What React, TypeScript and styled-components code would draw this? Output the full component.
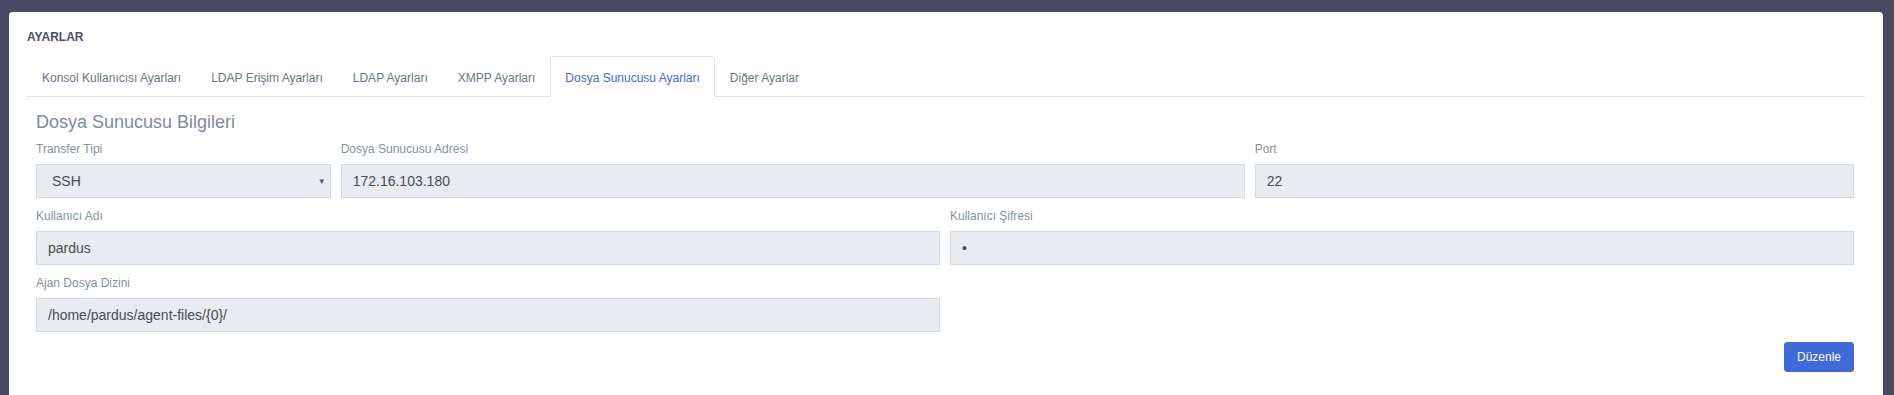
import styled, { createGlobalStyle } from "styled-components"

const GlobalStyle = createGlobalStyle`
  html, body {
    margin: 0;
    padding: 0;
    background: #4b4a63;
    font-family: "Liberation Sans", Arial, sans-serif;
  }
  * {
    box-sizing: border-box;
  }
`

const tabs = [
  "Konsol Kullanıcısı Ayarları",
  "LDAP Erişim Ayarları",
  "LDAP Ayarları",
  "XMPP Ayarları",
  "Dosya Sunucusu Ayarları",
  "Diğer Ayarlar",
]

export default function App() {
  return (
    <Page>
      <GlobalStyle />
      <Card>
        <Title>AYARLAR</Title>
        <TabBar>
          {tabs.map((t) => (
            <Tab key={t} $active={t === "Dosya Sunucusu Ayarları"}>
              {t}
            </Tab>
          ))}
        </TabBar>
        <Form>
          <Heading>Dosya Sunucusu Bilgileri</Heading>
          <Grid>
            <Field $span={2}>
              <Label>Transfer Tipi</Label>
              <SelectWrap>
                <Select defaultValue="ssh">
                  <option value="ssh">SSH</option>
                  <option value="ftp">FTP</option>
                </Select>
                <Arrow>▼</Arrow>
              </SelectWrap>
            </Field>
            <Field $span={6}>
              <Label>Dosya Sunucusu Adresi</Label>
              <Input defaultValue="172.16.103.180" />
            </Field>
            <Field $span={4}>
              <Label>Port</Label>
              <Input defaultValue="22" />
            </Field>
            <Field $span={6}>
              <Label>Kullanıcı Adı</Label>
              <Input defaultValue="pardus" />
            </Field>
            <Field $span={6}>
              <Label>Kullanıcı Şifresi</Label>
              <Input type="password" defaultValue="x" />
            </Field>
            <Field $span={6}>
              <Label>Ajan Dosya Dizini</Label>
              <Input defaultValue="/home/pardus/agent-files/{0}/" />
            </Field>
          </Grid>
          <Actions>
            <Button>Düzenle</Button>
          </Actions>
        </Form>
      </Card>
    </Page>
  )
}

const Page = styled.div`
  padding: 12px 11px 0 9px;
  height: 395px;
  overflow: hidden;
`

const Card = styled.div`
  background: #ffffff;
  border-radius: 4px;
  padding: 0 18px 40px;
  min-height: 400px;
  box-shadow: 0 1px 2px rgba(4, 9, 20, 0.05);
`

const Title = styled.div`
  padding: 17px 0 11px;
  font-size: 12px;
  line-height: 16px;
  font-weight: bold;
  color: #4a5066;
`

const TabBar = styled.div`
  display: flex;
  border-bottom: 1px solid #dee2e6;
  height: 41px;
`

const Tab = styled.div<{ $active?: boolean }>`
  height: 41px;
  padding: 3px 14px 0;
  display: flex;
  align-items: center;
  font-size: 12px;
  color: ${(p) => (p.$active ? "#3f6ad8" : "#66758d")};
  border: 1px solid ${(p) => (p.$active ? "#dee2e6" : "transparent")};
  border-bottom-color: ${(p) => (p.$active ? "#ffffff" : "transparent")};
  border-radius: 4px 4px 0 0;
  background: ${(p) => (p.$active ? "#ffffff" : "transparent")};
  margin-bottom: -1px;
  white-space: nowrap;
`

const Form = styled.div`
  padding: 0 11px 0 9px;
`

const Heading = styled.div`
  margin-top: 14px;
  font-size: 18px;
  line-height: 22px;
  color: #7d8ba2;
  margin-bottom: 8px;
`

const Grid = styled.div`
  display: grid;
  grid-template-columns: repeat(12, 1fr);
  column-gap: 10px;
  row-gap: 10px;
`

const Field = styled.div<{ $span: number }>`
  grid-column: span ${(p) => p.$span};
  display: flex;
  flex-direction: column;
`

const Label = styled.label`
  font-size: 12px;
  line-height: 16px;
  color: #8391a5;
  margin-bottom: 7px;
`

const inputLook = `
  height: 34px;
  width: 100%;
  background: #e8ebef;
  border: 1px solid #d2d8df;
  border-radius: 0;
  font-family: "Liberation Sans", Arial, sans-serif;
  font-size: 14px;
  color: #474c55;
  outline: none;
`

const Input = styled.input`
  ${inputLook}
  padding: 0 11px;
`

const SelectWrap = styled.div`
  position: relative;
`

const Select = styled.select`
  ${inputLook}
  appearance: none;
  -webkit-appearance: none;
  padding: 0 20px 0 15px;
`

const Arrow = styled.span`
  position: absolute;
  right: 5px;
  top: 50%;
  transform: translateY(-50%);
  font-size: 8px;
  color: #555b66;
  pointer-events: none;
`

const Actions = styled.div`
  display: flex;
  justify-content: flex-end;
  margin-top: 10px;
`

const Button = styled.button`
  width: 70px;
  height: 30px;
  background: #3f6ad8;
  border: 1px solid #3f6ad8;
  border-radius: 3px;
  color: #ffffff;
  font-family: "Liberation Sans", Arial, sans-serif;
  font-size: 12px;
  cursor: pointer;
`
